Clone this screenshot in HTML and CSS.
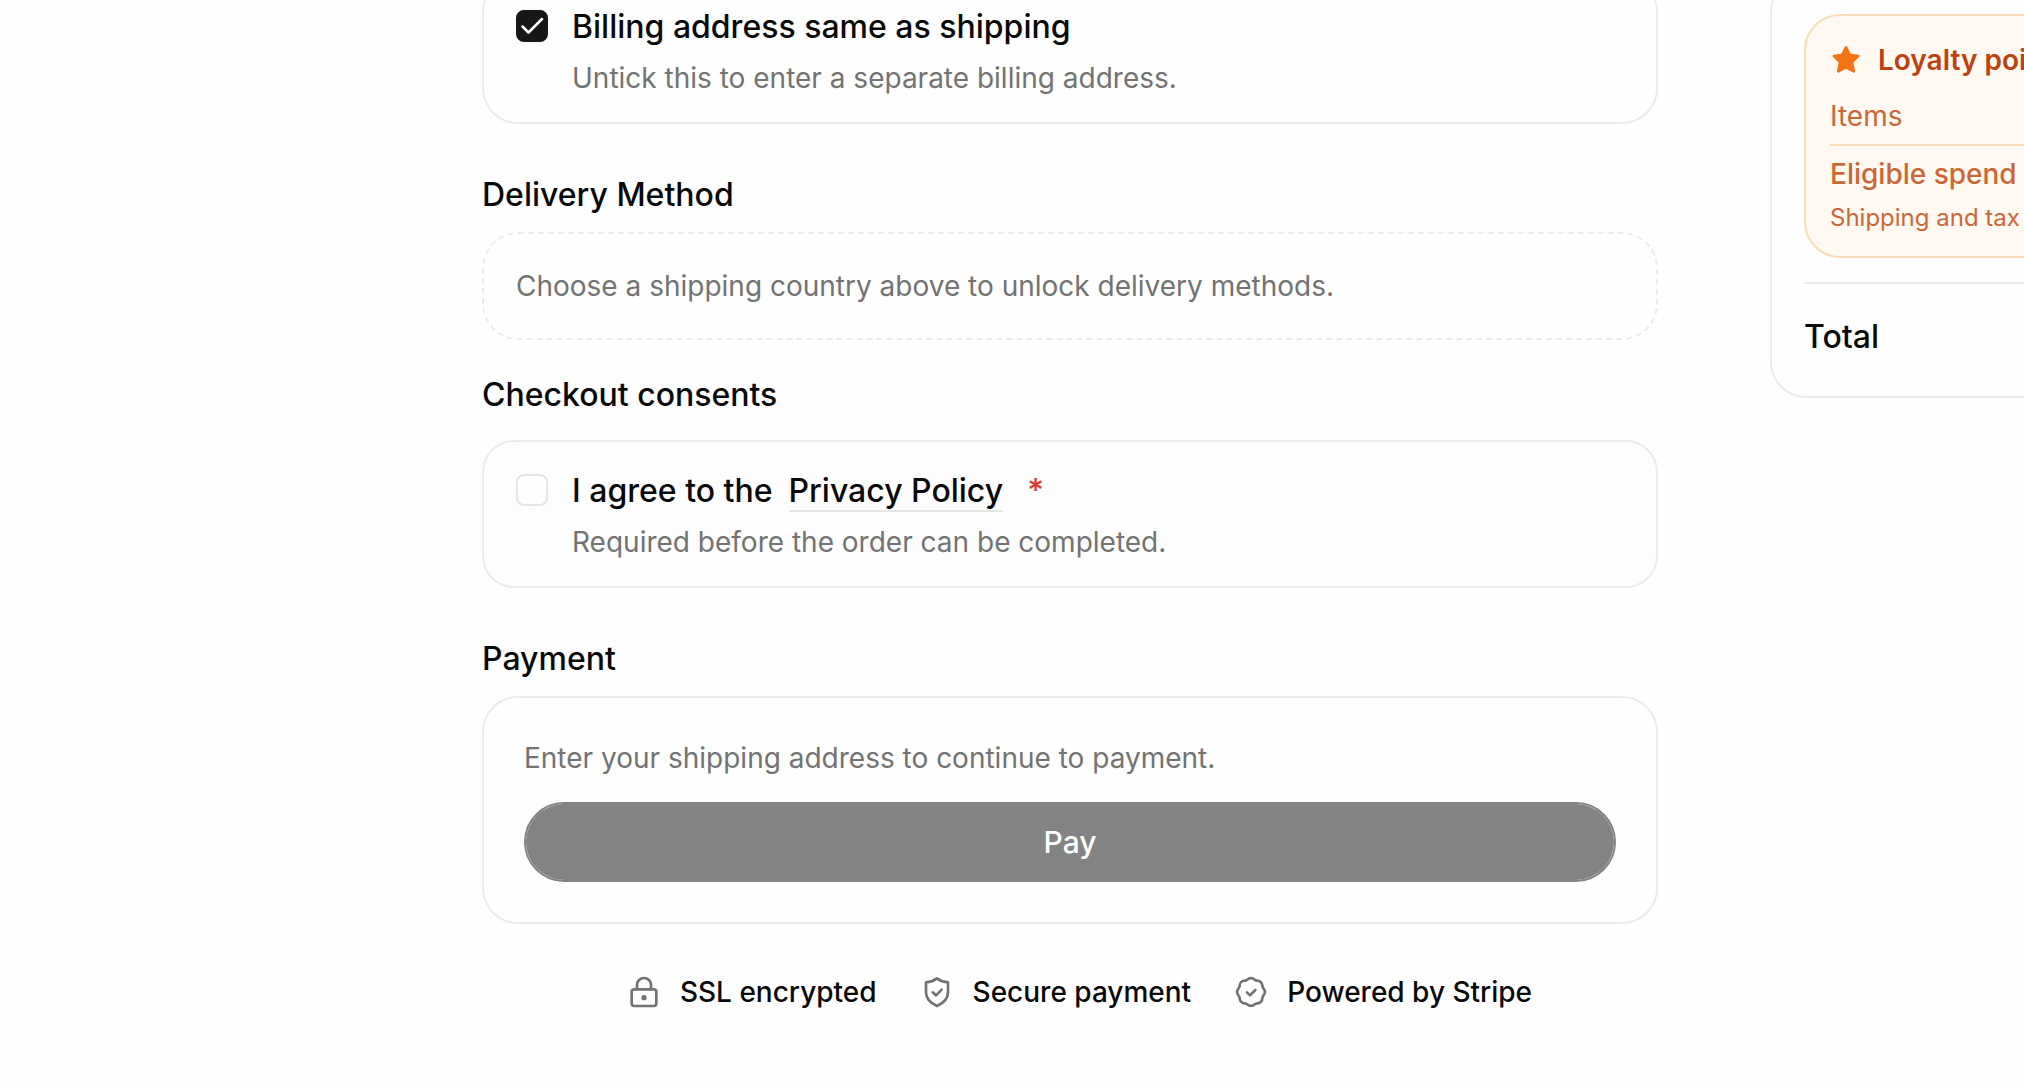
FILE: index.html
```html
<!DOCTYPE html>
<html lang="en">

<head>
    <meta charset="UTF-8">
    <meta name="viewport" content="width=device-width, initial-scale=1.0">
    <title>Checkout</title>
    <link rel="stylesheet" href="styles.css">
</head>

<body>

    <div class="checkout">

        <main class="steps">
            <div class="card option">
                <input type="checkbox" class="check" id="same-address" checked>
                <div>
                    <label class="label" for="same-address">Billing address same as shipping</label>
                    <p class="hint">Untick this to enter a separate billing address.</p>
                </div>
            </div>

            <section class="delivery">
                <h2>Delivery Method</h2>
                <div class="card dashed">
                    <p class="hint">Choose a shipping country above to unlock delivery methods.</p>
                </div>
            </section>

            <section class="consents">
                <h2>Checkout consents</h2>
                <div class="card option tinted">
                    <input type="checkbox" class="check" id="privacy">
                    <div>
                        <div class="label consent-line">
                            <label for="privacy">I agree to the</label>
                            <a href="#" class="policy">Privacy Policy</a>
                            <span class="required">*</span>
                        </div>
                        <p class="hint">Required before the order can be completed.</p>
                    </div>
                </div>
            </section>

            <section class="payment">
                <h2>Payment</h2>
                <div class="card pay-card">
                    <p class="hint">Enter your shipping address to continue to payment.</p>
                    <button class="pay" disabled>Pay</button>
                </div>
            </section>

            <ul class="trust">
                <li>
                    <svg class="icon" viewBox="0 0 24 24">
                        <rect x="2.75" y="10" width="18.5" height="12.5" rx="2" />
                        <path d="M6.75 10V6.75a5.25 5.25 0 0 1 10.5 0V10" />
                        <circle class="dot" cx="12" cy="16.25" r="2" />
                    </svg>
                    SSL encrypted
                </li>
                <li>
                    <svg class="icon" viewBox="0 0 24 24">
                        <path d="M12 1.75c2.3 1.8 5 2.7 8.25 3v7.5c0 5-3.5 8.2-8.25 10.25-4.75-2.05-8.25-5.25-8.25-10.25v-7.5c3.25-.3 5.95-1.2 8.25-3Z" />
                        <path d="M8.75 12.25l2.5 2.25 4.25-4.25" />
                    </svg>
                    Secure payment
                </li>
                <li>
                    <svg class="icon" viewBox="0 0 24 24">
                        <path d="M9.3 2.7a3.8 3.8 0 0 1 5.4 0 3.8 3.8 0 0 0 2 .8 3.8 3.8 0 0 1 3.8 3.8 3.8 3.8 0 0 0 .8 2 3.8 3.8 0 0 1 0 5.4 3.8 3.8 0 0 0-.8 2 3.8 3.8 0 0 1-3.8 3.8 3.8 3.8 0 0 0-2 .8 3.8 3.8 0 0 1-5.4 0 3.8 3.8 0 0 0-2-.8 3.8 3.8 0 0 1-3.8-3.8 3.8 3.8 0 0 0-.8-2 3.8 3.8 0 0 1 0-5.4 3.8 3.8 0 0 0 .8-2 3.8 3.8 0 0 1 3.8-3.8 3.8 3.8 0 0 0 2-.8Z" />
                        <path d="M9 12.25l2.25 2.25 4-4" />
                    </svg>
                    Powered by Stripe
                </li>
            </ul>
        </main>

        <aside class="summary">
            <div class="loyalty">
                <div class="loyalty-title">
                    <svg class="star" viewBox="0 0 24 24">
                        <path d="M12 2.5l2.8 5.7 6.3.9-4.6 4.5 1.3 6.9-5.8-3-5.8 3 1.3-6.9-4.6-4.5 6.3-.9Z" />
                    </svg>
                    Loyalty points
                </div>
                <p>Items</p>
                <p class="eligible">Eligible spend</p>
                <p class="note">Shipping and tax</p>
            </div>
            <div class="total">Total</div>
        </aside>

    </div>

</body>

</html>
```
FILE: styles.css
```css
* {
    box-sizing: border-box;
}

body {
    margin: 0;
    background: #fefefe;
    color: #0a0a0a;
    font-family: Inter, "Liberation Sans", sans-serif;
    font-size: 28px;
    line-height: 40px;
    overflow: hidden;
}

h2,
p,
ul {
    margin: 0;
    padding: 0;
}

/* the first card and the summary start above the fold */
.checkout {
    display: grid;
    grid-template-columns: minmax(0, 1fr) 254px;
    column-gap: 112px;
    margin-top: -24px;
    padding-left: 482px;
}

h2 {
    font-size: 32px;
    font-weight: 500;
    line-height: 46px;
}

.card {
    border: 2px solid #ebebeb;
    border-radius: 36px;
    padding: 32px;
}

.option {
    display: flex;
    gap: 24px;
    padding-bottom: 24px;
}

.dashed {
    border-style: dashed;
}

.tinted {
    border-radius: 32px;
    background: #fdfdfd;
}

.check {
    appearance: none;
    flex: none;
    width: 32px;
    height: 32px;
    margin: 0;
    border: 2px solid #e5e5e5;
    border-radius: 8px;
    background: #fefefe;
}

.check:checked {
    border-color: #171717;
    background: #171717 url("data:image/svg+xml,%3Csvg xmlns='http://www.w3.org/2000/svg' viewBox='0 0 28 28' fill='none' stroke='%23fff' stroke-width='2.5' stroke-linecap='round' stroke-linejoin='round'%3E%3Cpath d='M4.500 14.500l6 6L24 7'/%3E%3C/svg%3E") center / 28px no-repeat;
}

.label {
    display: block;
    font-size: 32px;
    font-weight: 500;
    line-height: 34px;
    margin-bottom: 14px;
}

.hint {
    color: #737373;
}

.consent-line {
    display: flex;
}

.policy {
    margin-left: 16px;
    color: inherit;
    text-decoration: none;
    box-shadow: 0 2px #fdfdfd, 0 4px #e5e5e5;
}

.required {
    margin-left: 24px;
    color: #d73a34;
}

.delivery {
    margin-top: 48px;
}

.delivery .card {
    margin-top: 14px;
}

.consents {
    margin-top: 32px;
}

.consents .card {
    margin-top: 22px;
}

.payment {
    margin-top: 48px;
}

.payment .card {
    margin-top: 14px;
}

.pay-card {
    padding: 40px;
}

.pay {
    display: block;
    width: 100%;
    height: 80px;
    margin-top: 24px;
    border: 2px solid #838383;
    border-radius: 40px;
    background: #838383;
    background-clip: padding-box;
    color: #fefefe;
    font: 500 30px/40px Inter, "Liberation Sans", sans-serif;
}

.trust {
    display: flex;
    justify-content: center;
    gap: 44px;
    margin-top: 48px;
    padding-left: 20px;
    list-style: none;
    font-weight: 500;
}

.trust li {
    display: flex;
    align-items: center;
    gap: 20px;
}

.icon {
    width: 32px;
    height: 32px;
    fill: none;
    stroke: #737373;
    stroke-width: 2;
    stroke-linecap: round;
    stroke-linejoin: round;
}

.icon .dot {
    fill: #737373;
    stroke: none;
}

.summary {
    width: 780px;
    height: 422px;
    border: 2px solid #ebebeb;
    border-radius: 36px;
    padding: 36px 32px 0;
}

.loyalty {
    height: 244px;
    border: 2px solid #f9dcb6;
    border-radius: 36px;
    padding: 24px;
    background: #fff9f2;
    color: #ca6737;
}

.loyalty-title {
    display: flex;
    align-items: center;
    gap: 16px;
    margin-bottom: 16px;
    color: #bc420f;
    font-weight: 600;
}

.star {
    width: 32px;
    height: 32px;
    fill: #f47414;
    stroke: #f47414;
    stroke-width: 2;
    stroke-linejoin: round;
}

.eligible {
    margin-top: 8px;
    border-top: 2px solid #f9dcb6;
    padding-top: 8px;
    font-weight: 500;
}

.note {
    margin-top: 4px;
    font-size: 24px;
}

.total {
    margin-top: 24px;
    border-top: 2px solid #ebebeb;
    padding-top: 30px;
    font-size: 32px;
    font-weight: 500;
    line-height: 46px;
}
```
